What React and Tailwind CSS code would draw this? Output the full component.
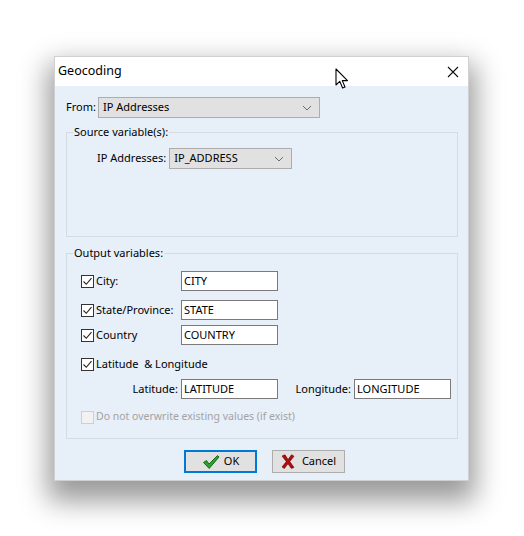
import React from "react";

const font = "font-['Noto_Sans',sans-serif]";

function Chevron() {
  return (
    <svg width="10" height="6" viewBox="0 0 10 6" className="shrink-0">
      <path d="M1 1 L5 5 L9 1" fill="none" stroke="#6d6d6d" strokeWidth="1" />
    </svg>
  );
}

function Combo({ value, className }) {
  return (
    <div
      className={`h-[21px] flex items-center justify-between bg-[#e1e1e1] border border-[#adadad] pl-[4px] pr-[7px] ${className}`}
    >
      <span>{value}</span>
      <Chevron />
    </div>
  );
}

function Check({ checked = true, disabled = false }) {
  return (
    <span
      className={`w-[13px] h-[13px] shrink-0 border flex items-center justify-center ${
        disabled ? "border-[#cfcfcf] bg-[#f2f2f2]" : "border-[#333333] bg-white"
      }`}
    >
      {checked && (
        <svg width="11" height="11" viewBox="0 0 11 11">
          <path d="M1.5 5.5 L4.3 8.3 L9.5 2.2" fill="none" stroke="#222" strokeWidth="1.1" />
        </svg>
      )}
    </span>
  );
}

function Field({ value, className = "" }) {
  return (
    <div
      className={`w-[97px] h-[20px] bg-white border border-[#7a7a7a] pl-[2px] flex items-center ${className}`}
    >
      {value}
    </div>
  );
}

function CheckRow({ label, value, className = "" }) {
  return (
    <div className={`h-[20px] flex items-center ${className}`}>
      <div className="w-[100px] flex items-center gap-[2px]">
        <Check />
        <span>{label}</span>
      </div>
      <Field value={value} />
    </div>
  );
}

export default function App() {
  return (
    <div className={`relative w-[524px] h-[536px] bg-white pl-[54px] pt-[56px] text-[11px] text-black ${font}`}>
      <div className="w-[415px] h-[425px] flex flex-col shadow-[0_14px_26px_6px_rgba(0,0,0,0.4)] border border-[#d0d0d0]">
        {/* title bar */}
        <div className="h-[29px] bg-white flex items-center justify-between pl-[3px] pr-[9px]">
          <span className="text-[12.5px]">Geocoding</span>
          <svg width="12" height="12" viewBox="0 0 12 12">
            <path d="M1 1 L11 11 M11 1 L1 11" stroke="#111" strokeWidth="1.1" />
          </svg>
        </div>

        {/* body */}
        <div className="flex-1 bg-[#e7eff9] pl-[11px] pr-[10px] pt-[11px]">
          <div className="flex items-center h-[21px]">
            <span className="w-[32px]">From:</span>
            <Combo value="IP Addresses" className="w-[222px]" />
          </div>

          <fieldset className="mt-[6px] h-[113px] border border-[#d3dbe3]">
            <legend className="ml-[6px] px-[1px] leading-[16px]">Source variable(s):</legend>
            <div className="flex items-center mt-[8px] pl-[30px]">
              <span className="mr-[3px]">IP Addresses:</span>
              <Combo value="IP_ADDRESS" className="w-[123px]" />
            </div>
          </fieldset>

          <fieldset className="mt-[8px] h-[194px] border border-[#d3dbe3]">
            <legend className="ml-[6px] px-[1px] leading-[16px]">Output variables:</legend>
            <div className="pl-[14px]">
              <CheckRow label="City:" value="CITY" className="mt-[10px]" />
              <CheckRow label="State/Province:" value="STATE" className="mt-[9px]" />
              <CheckRow label="Country" value="COUNTRY" className="mt-[5px]" />
              <div className="h-[20px] mt-[9px] flex items-center gap-[2px]">
                <Check />
                <span>Latitude &nbsp;&amp; Longitude</span>
              </div>
              <div className="h-[20px] mt-[5px] flex items-center">
                <span className="w-[100px] text-right pr-[3px]">Latitude:</span>
                <Field value="LATITUDE" />
                <span className="w-[76px] text-right pr-[3px]">Longitude:</span>
                <Field value="LONGITUDE" />
              </div>
              <div className="h-[20px] mt-[8px] flex items-center gap-[2px] text-[#a3a3a3]">
                <Check checked={false} disabled />
                <span className="text-[10.5px]">Do not overwrite existing values (if exist)</span>
              </div>
            </div>
          </fieldset>

          <div className="mt-[11px] flex pl-[118px] gap-[15px]">
            <button className="w-[73px] h-[23px] bg-[#e1e1e1] border-2 border-[#0078d7] flex items-center justify-center gap-[4px]">
              <svg width="18" height="16" viewBox="0 0 18 16">
                <path
                  d="M1.5 8.5 L4.5 6.5 L7 10 L15.5 1.5 L17 3 L7.2 14.5 Z"
                  fill="#29a329"
                  stroke="#155d15"
                  strokeWidth="0.9"
                  strokeLinejoin="round"
                />
              </svg>
              <span>OK</span>
            </button>
            <button className="w-[73px] h-[23px] bg-[#e1e1e1] border border-[#adadad] flex items-center justify-center gap-[7px]">
              <svg width="14" height="15" viewBox="0 0 14 15">
                <path
                  d="M1 2 L4 0.8 L7 5.5 L10.5 0.8 L13 2.2 L8.8 7.6 L13 13.4 L10.3 14.4 L7 9.7 L3.4 14.4 L1 13 L5.3 7.6 Z"
                  fill="#b00d0d"
                  stroke="#6a0000"
                  strokeWidth="0.6"
                  strokeLinejoin="round"
                />
              </svg>
              <span>Cancel</span>
            </button>
          </div>
        </div>
      </div>

      {/* mouse pointer over the title bar */}
      <svg
        className="absolute left-[335px] top-[68px]"
        width="14"
        height="22"
        viewBox="0 0 14 22"
      >
        <path
          d="M1 1 L1 17 L4.8 13.4 L7.6 20 L10 19 L7.3 12.6 L12.5 12.6 Z"
          fill="white"
          stroke="black"
          strokeWidth="1.1"
          strokeLinejoin="round"
        />
      </svg>
    </div>
  );
}
